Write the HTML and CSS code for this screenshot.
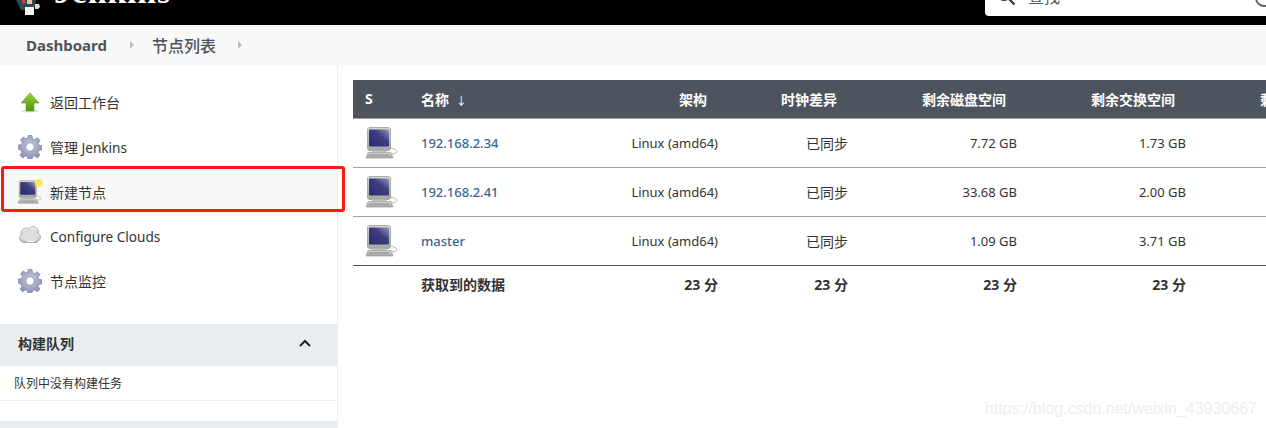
FILE: index.html
```html
<!DOCTYPE html>
<html lang="zh-CN">
<head>
<meta charset="utf-8">
<title>节点列表 - Jenkins</title>
<link rel="stylesheet" href="styles.css">
</head>
<body>
<svg class="defs" width="0" height="0" aria-hidden="true">
  <defs>
    <linearGradient id="scr" x1="0" y1="1" x2="1" y2="0"><stop offset="0" stop-color="#2c2a6e"/><stop offset=".6" stop-color="#3f3d80"/><stop offset="1" stop-color="#9a99ba"/></linearGradient>
    <linearGradient id="case" x1="0" y1="0" x2="0" y2="1"><stop offset="0" stop-color="#d5d7d5"/><stop offset="1" stop-color="#a3a6a2"/></linearGradient>
    <linearGradient id="grn" x1="0" y1="0" x2="0" y2="1"><stop offset="0" stop-color="#97d03a"/><stop offset="1" stop-color="#4e9a06"/></linearGradient>
    <radialGradient id="gr" cx=".5" cy=".4" r=".7"><stop offset="0" stop-color="#c9cbe2"/><stop offset="1" stop-color="#7f82a8"/></radialGradient>
    <linearGradient id="cld" x1="0" y1="0" x2="0" y2="1"><stop offset="0" stop-color="#f2f2f2"/><stop offset="1" stop-color="#b5b5b5"/></linearGradient>
    <symbol id="computer" viewBox="0 0 32 32">
      <path d="M3 .5h20l1.500 1.500v20l-1.500 1.500H3L1.500 22V2z" fill="url(#case)" stroke="#8f928e" stroke-width=".7"/>
      <rect x="3" y="2.500" width="20" height="17" rx="1" fill="url(#scr)"/>
      <path d="M6 23.500h14l1 2H5z" fill="#bfc1be"/>
      <path d="M2 25.500h23l2 5.500H0z" fill="url(#case)" stroke="#8f928e" stroke-width=".6"/>
      <path d="M3 28h20" stroke="#80827f" stroke-width=".8"/>
      <path d="M25 21c3 1 6 2 6 3.500s-2 2-5 2.500" fill="none" stroke="#b5b7b4"/>
    </symbol>
    <symbol id="gear" viewBox="0 0 24 24">
      <path fill="url(#gr)" stroke="#6f7298" stroke-width=".5" d="M10 .5h4l.6 3.300 2 .8 2.700-1.900 2.800 2.800-1.900 2.700.8 2 3.300.6v4l-3.300.6-.8 2 1.900 2.700-2.800 2.800-2.700-1.900-2 .8-.6 3.300h-4l-.6-3.300-2-.8-2.700 1.900-2.800-2.800 1.900-2.700-.8-2L.2 14v-4l3.300-.6.800-2-1.900-2.700 2.800-2.800 2.700 1.900 2-.8z"/>
      <circle cx="12" cy="12" r="4.200" fill="#fff" stroke="#6f7298" stroke-width=".6"/>
    </symbol>
  </defs>
</svg>

<header class="top">
  <div class="brand">
    <svg class="logo" viewBox="0 0 28 16" width="28" height="16" aria-hidden="true">
      <path d="M2 0h20l-1 7-6 3H7z" fill="#2f4655"/>
      <path d="M8 0h3l1 3-3 1z" fill="#c9473f"/>
      <path d="M13 0h5v4h-5z" fill="#d9c7b4"/>
      <path d="M11 7h9v8h-9z" fill="#f2f2f2"/>
      <path d="M21 4h4l1 3-2 2h-3z" fill="#e8d8c8"/>
    </svg>
    <span class="brand-name">Jenkins</span>
  </div>
  <div class="search">
    <svg class="search-icon" viewBox="0 0 20 20" width="20" height="20" aria-hidden="true"><circle cx="8" cy="6" r="6" fill="none" stroke="#333" stroke-width="2"/><path d="M12.500 10.500l6 6" stroke="#333" stroke-width="2.200"/></svg>
    <span class="search-text">查找</span>
    <svg class="help-icon" viewBox="0 0 20 20" width="20" height="20" aria-hidden="true"><circle cx="10" cy="7" r="8" fill="none" stroke="#555b66" stroke-width="1.800"/></svg>
  </div>
</header>

<nav class="crumbs">
  <a class="crumb-home">Dashboard</a>
  <span class="crumb-sep"></span>
  <a class="crumb-page">节点列表</a>
  <span class="crumb-sep"></span>
</nav>

<div class="page">
  <aside class="side">
    <ul class="tasks">
      <li class="task">
        <svg class="task-icon" viewBox="0 0 24 24" width="24" height="24" aria-hidden="true"><ellipse cx="12" cy="21" rx="9" ry="1.500" fill="#ddd"/><path d="M12 3l9 10h-5v8H8v-8H3z" fill="url(#grn)" stroke="#5c9e1e" stroke-width=".6"/></svg>
        <span class="zh">返回工作台</span>
      </li>
      <li class="task">
        <svg class="task-icon" width="24" height="24" aria-hidden="true"><use href="#gear"/></svg>
        <span><span class="zh">管理</span> Jenkins</span>
      </li>
      <li class="task task-active">
        <span class="task-icon-wrap">
          <svg class="task-icon" width="24" height="24" aria-hidden="true"><use href="#computer"/></svg>
          <i class="spark"></i>
        </span>
        <span class="zh">新建节点</span>
        <i class="annotation"></i>
      </li>
      <li class="task">
        <svg class="task-icon" viewBox="0 0 24 24" width="24" height="24" aria-hidden="true">
          <g fill="url(#cld)" stroke="#a5a5a5" stroke-width=".7">
            <circle cx="8" cy="9" r="5"/><circle cx="15" cy="8" r="5.500"/><circle cx="18" cy="13" r="4.500"/><circle cx="6" cy="14" r="4.500"/>
          </g>
          <path d="M6 8c1-2 4-3 6-1 2-2 5-1 6 1 2 1 3 3 2 5l-2 4H6l-2-3c-1-2 0-4 2-6z" fill="#dedede"/>
          <path d="M6 18.500h13" stroke="#b0b0b0" stroke-width="1"/>
        </svg>
        <span>Configure Clouds</span>
      </li>
      <li class="task">
        <svg class="task-icon" width="24" height="24" aria-hidden="true"><use href="#gear"/></svg>
        <span class="zh">节点监控</span>
      </li>
    </ul>

    <section class="panel">
      <h2 class="panel-head">构建队列
        <svg class="chev" viewBox="0 0 12 8" width="12" height="8" aria-hidden="true"><path d="M1 7l5-5 5 5" fill="none" stroke="#222" stroke-width="2"/></svg>
      </h2>
      <p class="panel-body">队列中没有构建任务</p>
    </section>
    <div class="panel-next"></div>
  </aside>

  <main class="main">
    <table class="nodes">
      <colgroup>
        <col class="c-s"><col class="c-name"><col class="c-arch"><col class="c-clock"><col class="c-disk"><col class="c-swap"><col class="c-temp">
      </colgroup>
      <thead>
        <tr>
          <th class="left">S</th>
          <th class="left">名称 <span class="arrow">↓</span></th>
          <th>架构</th>
          <th>时钟差异</th>
          <th>剩余磁盘空间</th>
          <th>剩余交换空间</th>
          <th>剩余临时空间</th>
        </tr>
      </thead>
      <tbody>
        <tr>
          <td class="left icon-cell"><svg class="pc" width="32" height="32" aria-hidden="true"><use href="#computer"/></svg></td>
          <td class="left"><a class="node-link">192.168.2.34</a></td>
          <td>Linux (amd64)</td><td class="zh">已同步</td><td>7.72 GB</td><td>1.73 GB</td><td></td>
        </tr>
        <tr>
          <td class="left icon-cell"><svg class="pc" width="32" height="32" aria-hidden="true"><use href="#computer"/></svg></td>
          <td class="left"><a class="node-link">192.168.2.41</a></td>
          <td>Linux (amd64)</td><td class="zh">已同步</td><td>33.68 GB</td><td>2.00 GB</td><td></td>
        </tr>
        <tr>
          <td class="left icon-cell"><svg class="pc" width="32" height="32" aria-hidden="true"><use href="#computer"/></svg></td>
          <td class="left"><a class="node-link">master</a></td>
          <td>Linux (amd64)</td><td class="zh">已同步</td><td>1.09 GB</td><td>3.71 GB</td><td></td>
        </tr>
      </tbody>
      <tfoot>
        <tr>
          <td></td>
          <td class="left">获取到的数据</td>
          <td>23 分</td><td>23 分</td><td>23 分</td><td>23 分</td><td></td>
        </tr>
      </tfoot>
    </table>
  </main>
</div>
<div class="watermark">https://blog.csdn.net/weixin_43930667</div>
</body>
</html>
```

FILE: styles.css
```css
* { box-sizing: border-box; }
html, body { margin: 0; padding: 0; height: 428px; overflow: hidden; background: #fff; }
body {
  font-family: "Noto Sans", "Noto Sans CJK SC", sans-serif;
  font-size: 13px;
  color: #333;
  position: relative;
}
.defs { position: absolute; }
.zh { font-size: 14px; }

.top {
  height: 25px;
  background: #000;
  display: flex;
  align-items: flex-end;
  justify-content: space-between;
  overflow: hidden;
}
.brand { display: flex; align-items: flex-end; margin-left: 14px; }
.logo { margin-bottom: 9px; }
.brand-name {
  font-family: "Liberation Serif", serif;
  font-weight: 700;
  font-size: 34px;
  line-height: 34px;
  color: #fff;
  letter-spacing: .8px;
  margin-left: 12px;
  margin-bottom: 16px;
}
.search {
  width: 281px;
  height: 30px;
  margin-bottom: 9px;
  background: #fff;
  border-radius: 0 0 0 4px;
  display: flex;
  align-items: flex-end;
  padding-left: 11px;
}
.search-icon { margin-bottom: 8px; }
.search-text { font-size: 16px; line-height: 20px; color: #555; margin-left: 12px; margin-bottom: 9px; flex: 1; }
.help-icon { margin-bottom: 5px; margin-right: -8px; }

.crumbs {
  height: 40px;
  background: #f8f8f8;
  display: flex;
  align-items: center;
  padding-left: 26px;
  padding-bottom: 1px;
  color: #4d545d;
}
.crumb-home { font-weight: 700; font-size: 15px; }
.crumb-page { font-weight: 500; font-size: 16px; }
.crumb-sep {
  width: 0; height: 0;
  border-left: 4px solid #bbb;
  border-top: 4px solid transparent;
  border-bottom: 4px solid transparent;
  margin: 0 18px 0 23px;
}
.crumb-page + .crumb-sep { margin-left: 22px; }

.page { display: flex; }
.side {
  width: 338px;
  flex: none;
  height: 363px;
  border-right: 1px solid #eee;
  padding-top: 15px;
}
.tasks { list-style: none; margin: 0; padding: 0; }
.task {
  height: 44.700px;
  display: flex;
  align-items: center;
  gap: 20px;
  padding-left: 18px;
  padding-right: 10px;
  font-size: 13.600px;
  color: #333;
  position: relative;
}
.task-icon { display: block; flex: none; width: 24px; height: 24px; margin-right: -12px; }
.task-icon-wrap { position: relative; display: block; margin-right: -12px; }
.task-icon-wrap .task-icon { margin-right: 0; }
.task-active { background: #f8f8f8; }
.spark {
  position: absolute;
  right: 0; top: 0;
  width: 6px; height: 6px;
  border-radius: 50%;
  background: #f5ee4a;
  box-shadow: 0 0 2px 1px #f5e98a;
}
.annotation {
  position: absolute;
  left: 1px; top: -3px;
  width: 344px; height: 46px;
  border: 3px solid #fb1a12;
  border-radius: 3px;
}
.panel { margin-top: 20.500px; }
.panel-head {
  margin: 0;
  height: 42px;
  background: #e9edf0;
  display: flex;
  align-items: center;
  justify-content: space-between;
  padding: 0 26px 3px 18px;
  font-size: 14px;
  font-weight: 700;
  color: #333;
}
.panel-body {
  margin: 0;
  height: 35px;
  line-height: 36px;
  font-size: 12px;
  padding-left: 14px;
  border-bottom: 1px solid #eee;
}
.panel-next { height: 10px; margin-top: 20px; background: #e9edf0; }

.main { flex: none; padding: 15px 0 0 15px; }
.nodes {
  table-layout: fixed;
  width: 1014px;
  border-collapse: collapse;
  font-size: 13px;
  color: #333;
}
.c-s { width: 56px; }
.c-name { width: 166px; }
.c-arch { width: 155px; }
.c-clock { width: 130px; }
.c-disk, .c-swap, .c-temp { width: 169px; }
.nodes th {
  height: 38px;
  background: #4d545d;
  border-bottom: 1px solid #9aa3ab;
  color: #fff;
  font-size: 14px;
  font-weight: 700;
  text-align: right;
  padding: 0 23px 0 12px;
  white-space: nowrap;
}
.nodes th.left { text-align: left; padding-right: 0; }
.arrow { font-size: 11px; font-weight: 400; margin-left: 3px; }
.nodes td {
  height: 49px;
  padding: 0 12px;
  text-align: right;
  border-bottom: 1px solid #9aa3ab;
  white-space: nowrap;
}
.nodes td.left { text-align: left; }
.nodes td.zh { font-size: 14px; }
.icon-cell svg { display: block; margin-left: 1px; }
.node-link { color: #3a6596; font-weight: 500; }
.nodes tbody tr:last-child td { border-bottom: 1px solid #4d545d; }
.nodes tfoot td { height: 38px; border: 0; font-size: 14px; font-weight: 700; padding-bottom: 0; }
.watermark {
  position: absolute;
  right: 9px;
  top: 400px;
  font-family: "Liberation Sans", sans-serif;
  font-size: 16px;
  line-height: 18px;
  color: #eee;
}
```
